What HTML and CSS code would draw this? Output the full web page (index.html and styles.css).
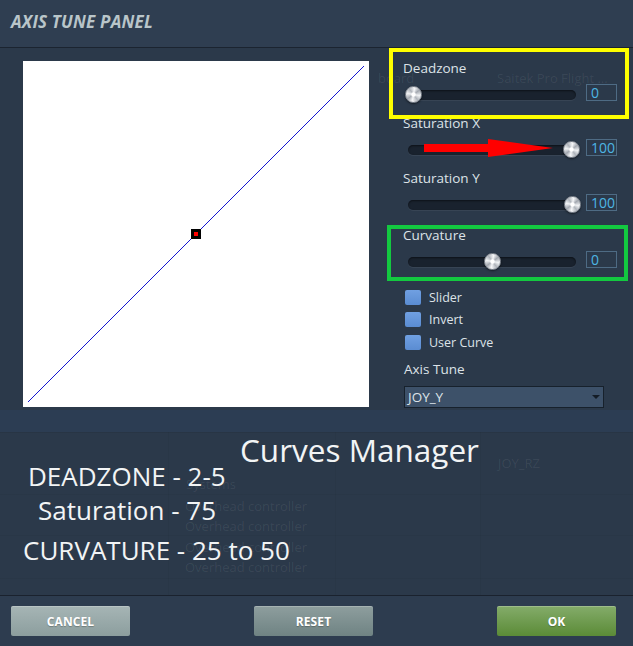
FILE: index.html
```html
<!DOCTYPE html>
<html lang="en">
<head>
<meta charset="utf-8">
<title>Axis Tune Panel</title>
<link rel="stylesheet" href="styles.css">
</head>
<body>
<div class="app">
  <header class="header">
    <h1 class="title">AXIS TUNE PANEL</h1>
  </header>

  <div class="main">
    <div class="ghost-layer">
      <span class="ghost g-board">board</span>
      <span class="ghost g-saitek">Saitek Pro Flight ...</span>
    </div>
    <div class="chart">
      <svg class="chart-svg" width="346" height="346" viewBox="0 0 346 346">
        <line x1="5" y1="341" x2="341" y2="5" stroke="#1414d2" stroke-width="1"/>
        <rect x="168" y="168" width="10" height="10" fill="#000"/>
        <rect x="171" y="171" width="4" height="4" fill="#ff0000"/>
      </svg>
    </div>

    <div class="panel">
      <div class="control">
        <div class="label">Deadzone</div>
        <div class="row">
          <div class="slider"><div class="track"></div><div class="knob" style="left:0.5px"></div></div>
          <div class="value">0</div>
        </div>
      </div>
      <div class="control">
        <div class="label">Saturation X</div>
        <div class="row">
          <div class="slider"><div class="track"></div><div class="knob" style="left:158.5px"></div></div>
          <div class="value">100</div>
        </div>
      </div>
      <div class="control">
        <div class="label">Saturation Y</div>
        <div class="row">
          <div class="slider"><div class="track"></div><div class="knob" style="left:159.5px"></div></div>
          <div class="value">100</div>
        </div>
      </div>
      <div class="control control-curv">
        <div class="label">Curvature</div>
        <div class="row">
          <div class="slider"><div class="track"></div><div class="knob" style="left:79.5px"></div></div>
          <div class="value">0</div>
        </div>
      </div>

      <div class="checks">
        <div class="check"><span class="box"></span>Slider</div>
        <div class="check"><span class="box"></span>Invert</div>
        <div class="check"><span class="box"></span>User Curve</div>
      </div>

      <div class="label axis-label">Axis Tune</div>
      <div class="select"><span>JOY_Y</span><span class="caret"></span></div>
    </div>
  </div>

  <div class="lower">
    <div class="ghost-layer">
      <span class="ghost g-joyrz">JOY_RZ</span>
      <span class="ghost g-sys">Systems</span>
      <span class="ghost g-oh1">Overhead controller</span>
      <span class="ghost g-oh2">Overhead controller</span>
      <span class="ghost g-oh3">Overhead controller</span>
      <span class="ghost g-oh4">Overhead controller</span>
    </div>
    <div class="heading">Curves Manager</div>
    <div class="note n1">DEADZONE - 2-5</div>
    <div class="note n2">Saturation - 75</div>
    <div class="note n3">CURVATURE - 25 to 50</div>
  </div>

  <footer class="footer">
    <button class="btn btn-cancel">CANCEL</button>
    <button class="btn btn-reset">RESET</button>
    <button class="btn btn-ok">OK</button>
  </footer>

  <div class="annot annot-yellow"></div>
  <div class="annot annot-green"></div>
  <svg class="arrow" width="131" height="18" viewBox="0 0 131 18">
    <rect x="0" y="5" width="66" height="8" fill="#ff0000"/>
    <polygon points="64,0 129,9 64,18" fill="#ff0000"/>
  </svg>
</div>
</body>
</html>
```

FILE: styles.css
```css
html, body {
  margin: 0;
  padding: 0;
}

body {
  background: #2b394a;
  font-family: "Open Sans", "DejaVu Sans", sans-serif;
}

.app {
  position: relative;
  width: 633px;
  height: 646px;
  overflow: hidden;
  display: flex;
  flex-direction: column;
  background: #2b394a;
}

/* Header */
.header {
  flex: none;
  border-bottom: 1px solid #1b2430;
  background: #2f3e51;
  display: flex;
  align-items: flex-start;
  padding: 12px 0 0 11px;
  box-sizing: content-box;
  height: 35px;
}

.title {
  margin: 0;
  font-size: 17px;
  line-height: 20px;
  font-weight: 700;
  font-style: italic;
  color: #b9c5c9;
  letter-spacing: 0.2px;
}

/* Main */
.main {
  flex: none;
  position: relative;
  isolation: isolate;
  height: 362px;
  display: flex;
  align-items: flex-start;
  padding-left: 23px;
}

.chart {
  flex: none;
  width: 346px;
  height: 346px;
  margin-top: 13px;
  background: #ffffff;
}

.chart-svg {
  display: block;
}

.panel {
  flex: none;
  width: 226px;
  margin-left: 34px;
  padding-top: 10.5px;
  display: flex;
  flex-direction: column;
}

.control + .control {
  margin-top: 10px;
}

.control.control-curv {
  margin-top: 12px;
}

.label {
  font-size: 13.5px;
  line-height: 18px;
  color: #dde3e8;
}

.row {
  display: flex;
  align-items: center;
  height: 18px;
  margin-top: 9px;
}

.slider {
  position: relative;
  flex: none;
  width: 175px;
  height: 18px;
  margin-left: 1px;
}

.track {
  width: 168px;
  height: 10px;
  margin: 4px 0 0 4px;
  border-radius: 5px;
  background: #19222e;
  box-shadow: inset 0 1px 2px rgba(0, 0, 0, 0.5), 0 1px 0 rgba(255, 255, 255, 0.06);
}

.knob {
  position: absolute;
  top: 0.5px;
  width: 17px;
  height: 17px;
  box-sizing: border-box;
  border-radius: 50%;
  border: 1px solid #858b94;
  background:
    radial-gradient(circle at 50% 50%, #ffffff 0 1.5px, rgba(255,255,255,0) 3px),
    conic-gradient(from 10deg, #f6f7f9, #a2a7af 12%, #f0f2f4 25%, #aeb3ba 37%, #f6f7f9 50%, #a2a7af 62%, #f0f2f4 75%, #aeb3ba 87%, #f6f7f9);
  box-shadow: 0 1px 2px rgba(0, 0, 0, 0.5);
}

.value {
  flex: none;
  align-self: flex-start;
  margin: -1.5px 0 0 7px;
  width: 31px;
  height: 17px;
  box-sizing: border-box;
  border: 1px solid #4e6b84;
  padding-left: 4px;
  font-size: 14px;
  line-height: 15px;
  color: #4db6e4;
}

.checks {
  display: flex;
  flex-direction: column;
  gap: 6.5px;
  margin-top: 18.5px;
}

.check {
  display: flex;
  align-items: center;
  height: 16px;
  font-size: 12.5px;
  color: #dde3e8;
}

.box {
  flex: none;
  width: 16px;
  height: 15px;
  margin: 0 8px 0 2px;
  border-radius: 2px;
  background: linear-gradient(#70a0e2, #5a8cd2);
}

.axis-label {
  margin-top: 9.5px;
  margin-left: 1px;
}

.select {
  margin-top: 8.5px;
  margin-left: 1px;
  width: 200px;
  height: 22px;
  box-sizing: border-box;
  border: 1px solid #17212c;
  background: #3d5169;
  display: flex;
  align-items: center;
  justify-content: space-between;
  padding: 0 3px 0 3px;
  font-size: 13.5px;
  color: #dce3e8;
}

.caret {
  width: 0;
  height: 0;
  border-left: 4px solid transparent;
  border-right: 4px solid transparent;
  border-top: 4px solid #141c26;
}

/* Ghost UI showing through */
.ghost-layer {
  position: absolute;
  inset: 0;
  z-index: -1;
}

.ghost {
  position: absolute;
  font-size: 13px;
  line-height: 18px;
  color: rgba(255, 255, 255, 0.075);
  white-space: nowrap;
}

.g-board { left: 378px; top: 21px; }
.g-saitek { left: 497px; top: 21px; }
.g-joyrz { left: 498px; top: 44px; }
.g-sys { left: 186px; top: 65px; }
.g-oh1 { left: 185px; top: 87px; }
.g-oh2 { left: 185px; top: 107px; }
.g-oh3 { left: 185px; top: 128px; }
.g-oh4 { left: 185px; top: 148px; }

/* Lower area */
.lower {
  flex: none;
  position: relative;
  isolation: isolate;
  height: 185px;
  box-sizing: border-box;
  padding-top: 24px;
  background:
    linear-gradient(#2c3d53, #2c3d53) 0 0 / 100% 22px no-repeat,
    linear-gradient(rgba(0,0,0,0.08), rgba(0,0,0,0.08)) 0 22px / 100% 1px no-repeat,
    linear-gradient(rgba(0,0,0,0.045), rgba(0,0,0,0.045)) 0 84px / 100% 1px no-repeat,
    linear-gradient(rgba(0,0,0,0.045), rgba(0,0,0,0.045)) 0 125px / 100% 1px no-repeat,
    linear-gradient(rgba(0,0,0,0.045), rgba(0,0,0,0.045)) 0 168px / 100% 1px no-repeat,
    linear-gradient(rgba(0,0,0,0.045), rgba(0,0,0,0.045)) 168px 22px / 1px 100% no-repeat,
    linear-gradient(rgba(0,0,0,0.045), rgba(0,0,0,0.045)) 335px 22px / 1px 100% no-repeat,
    linear-gradient(rgba(0,0,0,0.045), rgba(0,0,0,0.045)) 480px 22px / 1px 100% no-repeat,
    #2b394a;
}

.heading {
  margin-left: 240px;
  font-size: 31.5px;
  line-height: 32px;
  color: #f2f4f5;
}

.note {
  font-size: 26px;
  line-height: 26px;
  color: #f2f4f5;
  white-space: nowrap;
}

.n1 { margin: -3px 0 0 28px; }
.n2 { margin: 8px 0 0 38px; }
.n3 { margin: 14px 0 0 23px; }

/* Footer */
.footer {
  flex: none;
  height: 51px;
  box-sizing: border-box;
  border-top: 1px solid #1a222e;
  background: #2d3c4f;
  display: flex;
  justify-content: space-between;
  align-items: flex-start;
  padding: 10px 17px 0 11px;
}

.btn {
  width: 119px;
  height: 30px;
  border: none;
  border-radius: 2px;
  padding: 0;
  font-family: "Open Sans", "DejaVu Sans", sans-serif;
  font-weight: 700;
  font-size: 12px;
  color: #ffffff;
  letter-spacing: 0.1px;
  text-shadow: 0 1px 1px rgba(0, 0, 0, 0.25);
  box-shadow: inset 0 1px 0 rgba(255, 255, 255, 0.22);
}

.btn-cancel { background: linear-gradient(#a6b5b5, #8c9e9e); }
.btn-reset { background: linear-gradient(#8e9e9e, #6f8383); }
.btn-ok { background: linear-gradient(#84ac6a, #5b8b37); }

/* Annotations drawn over the screenshot */
.annot {
  position: absolute;
  box-sizing: border-box;
  pointer-events: none;
}

.annot-yellow {
  left: 389px;
  top: 48px;
  width: 240px;
  height: 71px;
  border: 4px solid #ffff00;
}

.annot-green {
  left: 387px;
  top: 225px;
  width: 241px;
  height: 56px;
  border: 4px solid #13c940;
}

.arrow {
  position: absolute;
  left: 424px;
  top: 139px;
  display: block;
}
```
